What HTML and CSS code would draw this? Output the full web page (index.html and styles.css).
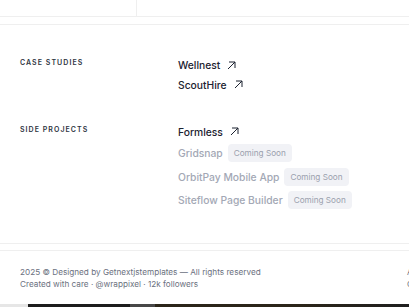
FILE: index.html
```html
<!DOCTYPE html>
<html lang="en">
<head>
  <meta charset="UTF-8">
  <meta name="viewport" content="width=device-width, initial-scale=1">
  <title>Work - Projects</title>
  <link rel="stylesheet" href="styles.css">
</head>
<body>

  <div class="top-row">
    <div class="top-cell"></div>
    <div class="top-cell wide"></div>
  </div>

  <section class="projects">
    <div class="group">
      <div class="label">Case Studies</div>
      <ul class="list">
        <li class="item"><a href="#" class="link">Wellnest
          <svg class="arrow" viewBox="0 0 9 9"><path d="M1 8 L8 1 M2 1 H8 V7"/></svg></a></li>
        <li class="item"><a href="#" class="link">ScoutHire
          <svg class="arrow" viewBox="0 0 9 9"><path d="M1 8 L8 1 M2 1 H8 V7"/></svg></a></li>
      </ul>
    </div>

    <div class="group">
      <div class="label">Side Projects</div>
      <ul class="list">
        <li class="item"><a href="#" class="link">Formless
          <svg class="arrow" viewBox="0 0 9 9"><path d="M1 8 L8 1 M2 1 H8 V7"/></svg></a></li>
        <li class="item soon">Gridsnap <span class="badge">Coming Soon</span></li>
        <li class="item soon">OrbitPay Mobile App <span class="badge">Coming Soon</span></li>
        <li class="item soon">Siteflow Page Builder <span class="badge">Coming Soon</span></li>
      </ul>
    </div>
  </section>

  <footer class="footer">
    <div class="footer-left">
      <p>2025 © Designed by Getnextjstemplates — All rights reserved</p>
      <p>Created with care · @wrappixel · 12k followers</p>
    </div>
    <div class="footer-right">
      <p>All projects</p>
      <p>Contact</p>
    </div>
  </footer>

  <div class="next-strip"></div>

</body>
</html>
```

FILE: styles.css
```css
html, body {
  margin: 0;
  padding: 0;
  overflow: hidden;
}
body {
  font-family: Inter, "Noto Sans", Arial, sans-serif;
  background: #fff;
  color: #1f2430;
  width: 409px;
}

/* top grid remains */
.top-row {
  display: flex;
  height: 16px;
  border-bottom: 1px solid #efefef;
}
.top-cell {
  width: 136px;
  border-right: 1px solid #efefef;
}
.top-cell.wide {
  flex: 1;
  border-right: none;
}

/* projects */
.projects {
  margin-top: 7px;
  border-top: 1px solid #efefef;
  border-bottom: 1px solid #efefef;
  padding: 33px 20px 34px;
  display: flex;
  flex-direction: column;
  gap: 33px;
}
.group {
  display: flex;
  align-items: flex-start;
}
.label {
  width: 158px;
  flex: none;
  font-size: 7px;
  line-height: 10px;
  font-weight: 600;
  letter-spacing: 1.05px;
  text-transform: uppercase;
  color: #2f3642;
}
.list {
  list-style: none;
  margin: 0;
  padding: 0;
  display: flex;
  flex-direction: column;
  gap: 5.5px;
}
.item {
  display: flex;
  align-items: center;
  gap: 5px;
  font-size: 10.3px;
  line-height: 14px;
  font-weight: 500;
}
.link {
  display: flex;
  align-items: center;
  gap: 7px;
  color: #1c2230;
  text-decoration: none;
}
.arrow {
  width: 9px;
  height: 9px;
  fill: none;
  stroke: #1c2230;
  stroke-width: 1;
}
.item.soon {
  color: #a3a8b5;
}
.badge {
  background: #f1f2f6;
  color: #9aa0ad;
  font-size: 8.2px;
  line-height: 18px;
  padding: 0 6px;
  border-radius: 4px;
  font-weight: 400;
}

/* footer */
.footer {
  margin-top: 6px;
  border-top: 1px solid #efefef;
  padding: 15px 0 14px 20px;
  display: flex;
  font-size: 8.2px;
  line-height: 12px;
  color: #6b7180;
}
.footer p {
  margin: 0;
}
.footer-left {
  width: 387px;
  flex: none;
}
.footer-right {
  white-space: nowrap;
}

.next-strip {
  height: 3px;
  background: linear-gradient(90deg, #e6e6e6 0 28px, #1d1d1d 28px 130px, #474747 130px 155px, #2b2519 155px 300px, #1f1f1f 409px);
}
```
